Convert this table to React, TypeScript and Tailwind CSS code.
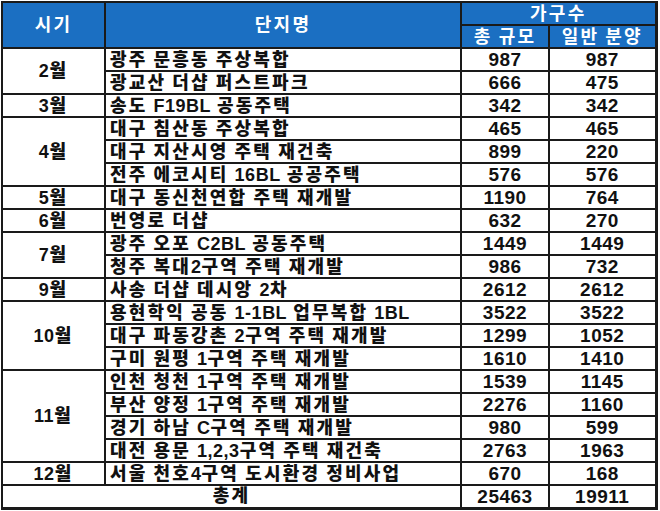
const font = { fontFamily: '"Liberation Sans", "Noto Sans CJK KR", sans-serif' }

type Row = { name: string; total: string; general: string }
type Group = { month: string; rows: Row[] }

const groups: Group[] = [
  { month: '2월', rows: [
    { name: '광주 문흥동 주상복합', total: '987', general: '987' },
    { name: '광교산 더샵 퍼스트파크', total: '666', general: '475' },
  ] },
  { month: '3월', rows: [
    { name: '송도 F19BL 공동주택', total: '342', general: '342' },
  ] },
  { month: '4월', rows: [
    { name: '대구 침산동 주상복합', total: '465', general: '465' },
    { name: '대구 지산시영 주택 재건축', total: '899', general: '220' },
    { name: '전주 에코시티 16BL 공공주택', total: '576', general: '576' },
  ] },
  { month: '5월', rows: [
    { name: '대구 동신천연합 주택 재개발', total: '1190', general: '764' },
  ] },
  { month: '6월', rows: [
    { name: '번영로 더샵', total: '632', general: '270' },
  ] },
  { month: '7월', rows: [
    { name: '광주 오포 C2BL 공동주택', total: '1449', general: '1449' },
    { name: '청주 복대2구역 주택 재개발', total: '986', general: '732' },
  ] },
  { month: '9월', rows: [
    { name: '사송 더샵 데시앙 2차', total: '2612', general: '2612' },
  ] },
  { month: '10월', rows: [
    { name: '용현학익 공동 1-1BL 업무복합 1BL', total: '3522', general: '3522' },
    { name: '대구 파동강촌 2구역 주택 재개발', total: '1299', general: '1052' },
    { name: '구미 원평 1구역 주택 재개발', total: '1610', general: '1410' },
  ] },
  { month: '11월', rows: [
    { name: '인천 청천 1구역 주택 재개발', total: '1539', general: '1145' },
    { name: '부산 양정 1구역 주택 재개발', total: '2276', general: '1160' },
    { name: '경기 하남 C구역 주택 재개발', total: '980', general: '599' },
    { name: '대전 용문 1,2,3구역 주택 재건축', total: '2763', general: '1963' },
  ] },
  { month: '12월', rows: [
    { name: '서울 천호4구역 도시환경 정비사업', total: '670', general: '168' },
  ] },
]

// hangul gets wide spacing like the original font, latin/digits stay tight
function Mixed({ text }: { text: string }) {
  return (
    <>
      {text.split(/([A-Za-z0-9,\-]+|\s+)/).filter(Boolean).map((part, i) => {
        if (/^\s+$/.test(part)) return <span key={i} className="tracking-[1px]">{part}</span>
        if (/^[A-Za-z0-9,\-]+$/.test(part)) return <span key={i} className="tracking-[0.5px]">{part}</span>
        return <span key={i} className="tracking-[2.2px]">{part}</span>
      })}
    </>
  )
}

const cell = 'border-2 border-[#1a1a1a] p-0'
const head = `${cell} bg-[#1b6fc2] text-white text-center`
const num = `${cell} text-center text-[19px] tracking-[0.5px]`

export default function App() {
  return (
    <div className="bg-white w-[660px] h-[511px] pl-px pt-px text-[#111] font-black" style={font}>
      <table className="border-collapse table-fixed w-[654px] border-t border-l border-r-[3px] border-b-[3px] border-[#1a1a1a] text-[18px] leading-none">
        <colgroup>
          <col className="w-[103px]" />
          <col className="w-[356px]" />
          <col className="w-[88px]" />
          <col className="w-[107px]" />
        </colgroup>
        <thead>
          <tr className="h-[23px]">
            <th rowSpan={2} className={head}><Mixed text="시기" /></th>
            <th rowSpan={2} className={head}><Mixed text="단지명" /></th>
            <th colSpan={2} className={head}><Mixed text="가구수" /></th>
          </tr>
          <tr className="h-[23px]">
            <th className={head}><Mixed text="총 규모" /></th>
            <th className={head}><Mixed text="일반 분양" /></th>
          </tr>
        </thead>
        <tbody>
          {groups.map(g => g.rows.map((r, i) => (
            <tr key={g.month + i} className="h-[23px]">
              {i === 0 && (
                <td rowSpan={g.rows.length} className={`${cell} text-center`}><Mixed text={g.month} /></td>
              )}
              <td className={`${cell} pl-[4px] whitespace-nowrap`}><Mixed text={r.name} /></td>
              <td className={num}>{r.total}</td>
              <td className={num}>{r.general}</td>
            </tr>
          )))}
          <tr className="h-[23px]">
            <td colSpan={2} className={`${cell} text-center`}><Mixed text="총계" /></td>
            <td className={num}>25463</td>
            <td className={num}>19911</td>
          </tr>
        </tbody>
      </table>
    </div>
  )
}
